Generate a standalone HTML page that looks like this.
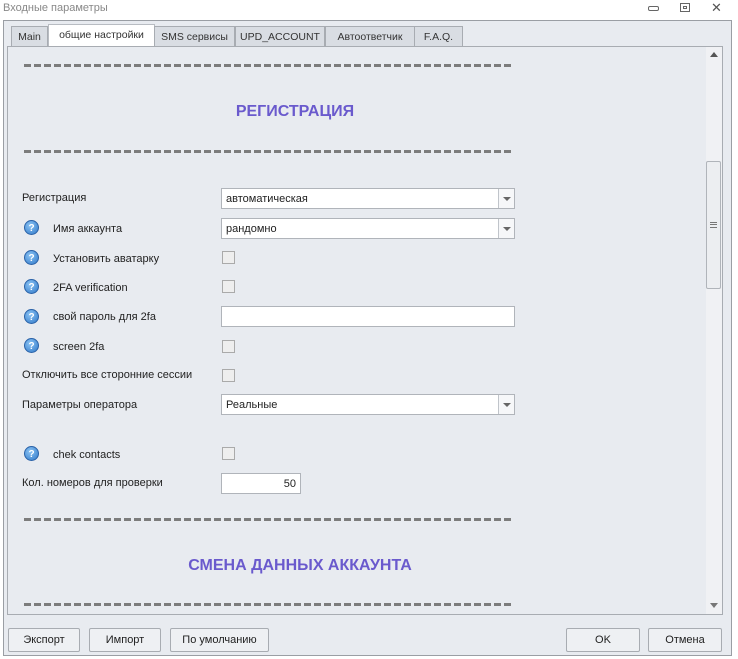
<!DOCTYPE html>
<html><head><meta charset="utf-8"><style>
*{box-sizing:border-box;margin:0;padding:0}
body{width:738px;height:659px;background:#fff;font-family:"Liberation Sans","DejaVu Sans",sans-serif;font-size:11px;color:#222;position:relative;overflow:hidden}
.abs{position:absolute}
.title{left:3px;top:2px;color:#888;font-size:11px}
.frame{left:3px;top:20px;width:729px;height:636px;border:1px solid #9a9ea4;background:#e8ebf0}
.tab{position:absolute;top:26px;height:21px;border:1px solid #a8acb2;border-bottom:none;background:#d9dde3;font-size:10.5px;text-align:center;line-height:20px;color:#333}
.tab.act{background:#fff;top:24px;height:23px;border-color:#b8bcc2}
.panel{left:7px;top:46px;width:716px;height:569px;border:1px solid #a8acb2;background:#e8ebf0}
.dash{height:3px;width:489px;left:24px;background:repeating-linear-gradient(90deg,#7c7c7c 0 7px,transparent 7px 10px)}
.head{color:#6a5acd;font-weight:bold;font-size:16px;text-align:center}
.lbl{font-size:11px;color:#222}
.inp{left:221px;width:294px;height:21px;background:#fff;border:1px solid #b0b4ba;padding-left:4px;line-height:20px}
.dd{position:absolute;right:0;top:0;width:16px;height:19px;border-left:1px solid #c0c4ca;background:#f6f7f9}
.dd:after{content:"";position:absolute;left:4px;top:8px;border:4px solid transparent;border-top:4px solid #666}
.cb{left:222px;width:13px;height:13px;border:1px solid #aaa;background:#eee}
.q{left:24px;width:15px;height:15px;border-radius:50%;background:radial-gradient(circle at 40% 35%,#8cc4f4,#2f78c8);color:#fff;font-weight:bold;font-size:10px;text-align:center;line-height:15px;border:1px solid #2a62a8}
.btn{top:628px;height:24px;border:1px solid #a8acb2;border-radius:2px;background:#eef0f3;text-align:center;line-height:22px;font-size:11px}
</style></head><body>
<div class="abs title">Входные параметры</div>
<div class="abs" style="left:648px;top:6px;width:11px;height:5px;border:1px solid #666;border-radius:2px"></div>
<div class="abs" style="left:680px;top:3px;width:10px;height:9px;border:1px solid #666"></div>
<div class="abs" style="left:683px;top:6px;width:4px;height:3px;border:1px solid #666"></div>
<div class="abs" style="left:711px;top:0px;font-size:13px;color:#555">✕</div>
<div class="abs frame"></div>
<div class="tab" style="left:11px;width:37px">Main</div>
<div class="tab act" style="left:48px;width:107px">общие настройки</div>
<div class="tab" style="left:154px;width:81px">SMS сервисы</div>
<div class="tab" style="left:235px;width:90px">UPD_ACCOUNT</div>
<div class="tab" style="left:325px;width:90px">Автоответчик</div>
<div class="tab" style="left:414px;width:49px">F.A.Q.</div>
<div class="abs panel"></div>
<div class="abs" style="left:706px;top:47px;width:16px;height:567px;background:#f0f1f4"></div>
<div class="abs" style="left:710px;top:52px;border:4px solid transparent;border-bottom:5px solid #555;border-top:none"></div>
<div class="abs" style="left:706px;top:161px;width:15px;height:128px;border:1px solid #b0b4ba;border-radius:2px;background:#eceef1"></div>
<div class="abs" style="left:710px;top:222px;width:7px;height:6px;border-top:1px solid #777;border-bottom:1px solid #777"></div>
<div class="abs" style="left:710px;top:224px;width:7px;height:1px;background:#777"></div>
<div class="abs" style="left:710px;top:603px;border:4px solid transparent;border-top:5px solid #777;border-bottom:none"></div>

<div class="abs dash" style="top:64px"></div>
<div class="abs head" style="left:195px;top:103px;width:200px">РЕГИСТРАЦИЯ</div>
<div class="abs dash" style="top:150px"></div>

<div class="abs lbl" style="left:22px;top:192px">Регистрация</div>
<div class="abs inp" style="top:188px">автоматическая<div class="dd"></div></div>
<div class="abs q" style="top:220px">?</div><div class="abs lbl" style="left:53px;top:223px">Имя аккаунта</div>
<div class="abs inp" style="top:218px">рандомно<div class="dd"></div></div>
<div class="abs q" style="top:250px">?</div><div class="abs lbl" style="left:53px;top:253px">Установить аватарку</div>
<div class="abs cb" style="top:251px"></div>
<div class="abs q" style="top:279px">?</div><div class="abs lbl" style="left:53px;top:282px">2FA verification</div>
<div class="abs cb" style="top:280px"></div>
<div class="abs q" style="top:309px">?</div><div class="abs lbl" style="left:53px;top:311px">свой пароль для 2fa</div>
<div class="abs inp" style="top:306px"></div>
<div class="abs q" style="top:338px">?</div><div class="abs lbl" style="left:53px;top:341px">screen 2fa</div>
<div class="abs cb" style="top:340px"></div>
<div class="abs lbl" style="left:22px;top:369px">Отключить все сторонние сессии</div>
<div class="abs cb" style="top:369px"></div>
<div class="abs lbl" style="left:22px;top:399px">Параметры оператора</div>
<div class="abs inp" style="top:394px">Реальные<div class="dd"></div></div>
<div class="abs q" style="top:446px">?</div><div class="abs lbl" style="left:53px;top:449px">chek contacts</div>
<div class="abs cb" style="top:447px"></div>
<div class="abs lbl" style="left:22px;top:477px">Кол. номеров для проверки</div>
<div class="abs inp" style="top:473px;width:80px;text-align:right;padding-right:4px">50</div>

<div class="abs dash" style="top:518px"></div>
<div class="abs head" style="left:150px;top:557px;width:300px">СМЕНА ДАННЫХ АККАУНТА</div>
<div class="abs dash" style="top:603px"></div>

<div class="abs btn" style="left:8px;width:72px">Экспорт</div>
<div class="abs btn" style="left:89px;width:72px">Импорт</div>
<div class="abs btn" style="left:170px;width:99px">По умолчанию</div>
<div class="abs btn" style="left:566px;width:74px">OK</div>
<div class="abs btn" style="left:648px;width:74px">Отмена</div>
</body></html>
